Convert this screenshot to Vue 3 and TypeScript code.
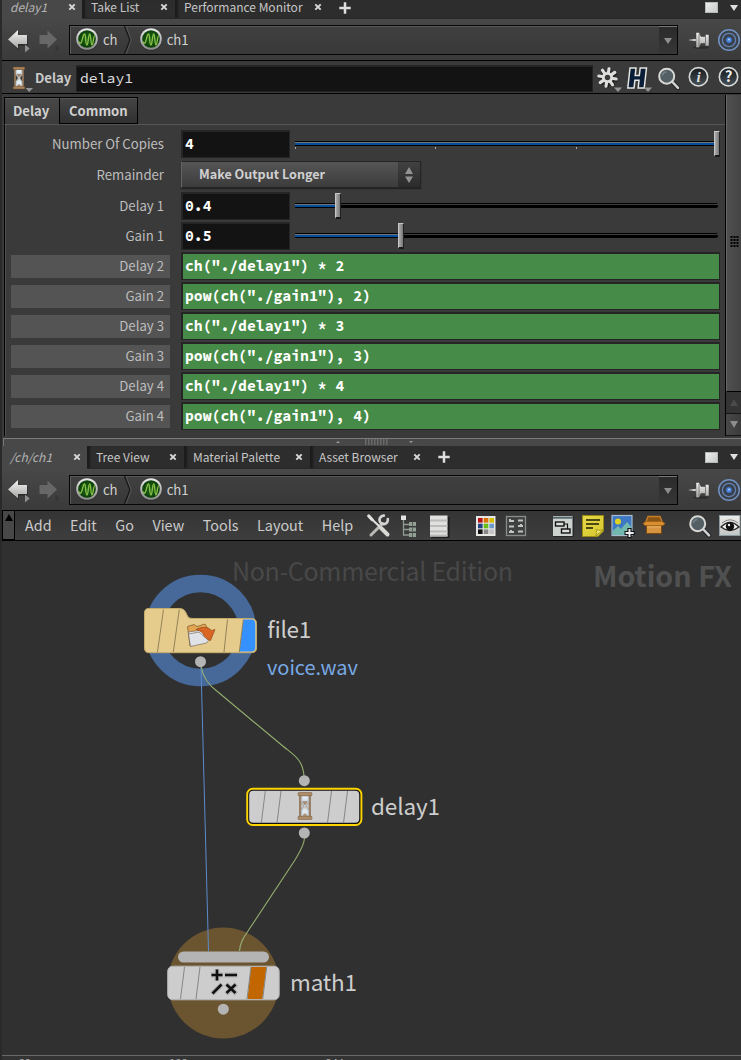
<script setup lang="ts">
interface Tab { label: string; width: number; active?: boolean }
interface Pane { id: string; tabs: Tab[] }
interface Param {
  label: string
  kind: 'slider' | 'menu' | 'expr'
  value: string
  pos?: number
  ticks?: boolean
}

const panes: Pane[] = [
  {
    id: 'params',
    tabs: [
      { label: 'delay1', width: 80, active: true },
      { label: 'Take List', width: 93 },
      { label: 'Performance Monitor', width: 154 },
    ],
  },
  {
    id: 'network',
    tabs: [
      { label: '/ch/ch1', width: 85, active: true },
      { label: 'Tree View', width: 97 },
      { label: 'Material Palette', width: 126 },
      { label: 'Asset Browser', width: 118 },
    ],
  },
]

const params: Param[] = [
  { label: 'Number Of Copies', kind: 'slider', value: '4', pos: 419, ticks: true },
  { label: 'Remainder', kind: 'menu', value: 'Make Output Longer' },
  { label: 'Delay 1', kind: 'slider', value: '0.4', pos: 40 },
  { label: 'Gain 1', kind: 'slider', value: '0.5', pos: 103 },
  { label: 'Delay 2', kind: 'expr', value: 'ch("./delay1") * 2' },
  { label: 'Gain 2', kind: 'expr', value: 'pow(ch("./gain1"), 2)' },
  { label: 'Delay 3', kind: 'expr', value: 'ch("./delay1") * 3' },
  { label: 'Gain 3', kind: 'expr', value: 'pow(ch("./gain1"), 3)' },
  { label: 'Delay 4', kind: 'expr', value: 'ch("./delay1") * 4' },
  { label: 'Gain 4', kind: 'expr', value: 'pow(ch("./gain1"), 4)' },
]

const menus = ['Add', 'Edit', 'Go', 'View', 'Tools', 'Layout', 'Help']
const toolGroups = [['tools', 'tree', 'list'], ['palette', 'grid'], ['netbox', 'note', 'image', 'box'], ['search', 'eye']]
</script>

<template>
  <div class="app">
    <svg class="defs" aria-hidden="true">
      <defs>
        <linearGradient id="silver" x1="0" y1="0" x2="0" y2="1"><stop offset="0" stop-color="#f4f4f2" /><stop offset="1" stop-color="#a4a4a2" /></linearGradient>
        <linearGradient id="ring" x1="0" y1="0" x2="0" y2="1"><stop offset="0" stop-color="#ededed" /><stop offset="1" stop-color="#8a8a8a" /></linearGradient>
        <radialGradient id="green"><stop offset="0" stop-color="#1c6a14" /><stop offset="1" stop-color="#0c3f0a" /></radialGradient>
        <linearGradient id="noteFill" x1="0" y1="0" x2="1" y2="1"><stop offset="0" stop-color="#e6da48" /><stop offset="1" stop-color="#d6c62e" /></linearGradient>
        <linearGradient id="badge" x1="0" y1="0" x2="0" y2="1"><stop offset="0" stop-color="#161a1d" /><stop offset="1" stop-color="#465157" /></linearGradient>
        <linearGradient id="eyeFill" x1="0" y1="0" x2="0" y2="1"><stop offset="0" stop-color="#ececea" /><stop offset="1" stop-color="#c4c6c2" /></linearGradient>
      </defs>
      <symbol id="i-wave" viewBox="0 0 24 24">
        <circle cx="12" cy="12.6" r="11" fill="#2a2a2a" />
        <circle cx="12" cy="12" r="10.8" fill="url(#ring)" />
        <circle cx="12" cy="12" r="8.8" fill="url(#green)" />
        <path d="M3.8 14.500C5 17 6 17 7 13.500S8.600 6.500 9.700 7s.8 11 2.200 11S13.400 7 14.700 7s1 11 2.300 11 1.200-9 2.800-9.500" fill="none" stroke="#8fc24c" stroke-width="1.300" />
      </symbol>
      <symbol id="i-pin" viewBox="0 0 24 20">
        <ellipse cx="14" cy="17.500" rx="8" ry="1.300" fill="#2c2c2c" />
        <path d="M1 10 9 8.800V11.200Z" fill="#d8d8d8" />
        <path d="M9 2.500h3l2 4h4.500V4.500h3.500v11.500h-3.500v-2.500h-4.500l-2 4H9Z" fill="url(#silver)" stroke="#3b3b3b" stroke-width=".5" />
        <path d="M12 4v12M18.500 5v10.500" stroke="#7b7b7b" stroke-width="1" />
      </symbol>
      <symbol id="i-target" viewBox="0 0 24 24">
        <circle cx="12" cy="12" r="10.300" fill="#3c4149" stroke="#7191c2" stroke-width="1.500" />
        <circle cx="12" cy="12" r="6.600" fill="#3a3f47" stroke="#6283b4" stroke-width="1.300" />
        <circle cx="12" cy="12" r="3.800" fill="#33486a" />
        <circle cx="12" cy="12" r="2.700" fill="#4d86da" />
        <circle cx="12" cy="11.500" r="1" fill="#a4c9ff" />
      </symbol>
      <symbol id="i-hourglass" viewBox="0 0 14 26">
        <path d="M2.500 2V24M11.500 2V24" stroke="#8f7152" stroke-width="2.200" />
        <path d="M3.300 3h7.400v6L8 13l2.700 4v6H3.300v-6L6 13 3.300 9Z" fill="#cbdbe6" stroke="#94877a" stroke-width=".7" />
        <path d="M4 8.500h6L7 12.500Z" fill="#9c8268" />
        <path d="M7 13v6" stroke="#c4b49f" stroke-width=".9" />
        <path d="M4.500 22.500 7 19l2.500 3.500Z" fill="#aa8b6c" />
        <path d="M4.800 4h4.400v3H4.800ZM4.700 18 7 15l2.300 3v2H4.700Z" fill="#edf4fa" opacity=".8" />
        <rect x=".3" y=".5" width="13.400" height="2.900" rx="1" fill="#ad8257" stroke="#6f5032" stroke-width=".6" />
        <rect x=".3" y="22.600" width="13.400" height="2.900" rx="1" fill="#ad8257" stroke="#6f5032" stroke-width=".6" />
      </symbol>
      <symbol id="i-search" viewBox="0 0 24 24">
        <path d="M15 15 21 21.500" stroke="#20242a" stroke-width="4.200" stroke-linecap="round" />
        <path d="M14.500 14.500 21 21.300" stroke="#d2d2d0" stroke-width="2.500" stroke-linecap="round" />
        <circle cx="9.700" cy="9.700" r="7.500" fill="#535f65" stroke="#d8d8d5" stroke-width="2" />
        <path d="M5.500 9a4 4 0 0 1 4-3.600" fill="none" stroke="#758289" stroke-width="1.500" />
      </symbol>
    </svg>

    <section v-for="pane in panes" :key="pane.id" class="pane" :class="pane.id">
      <header class="tabs">
        <div v-for="t in pane.tabs" :key="t.label" class="tab" :class="{ active: t.active }" :style="{ width: t.width + 'px' }">
          <span class="tab-name">{{ t.label }}</span>
          <svg class="close" viewBox="0 0 8 8"><path d="M1.300 1.300 6.700 6.700M6.700 1.300 1.300 6.700" /></svg>
        </div>
        <svg class="plus" viewBox="0 0 12 12"><path d="M6 .3V11.700M.3 6H11.700" /></svg>
        <span class="square"></span>
        <svg class="drop" viewBox="0 0 8 6"><path d="M0 0H8L4 6Z" /></svg>
      </header>

      <div class="pathbar">
        <svg class="nav" viewBox="0 0 60 40">
          <path d="M8 19.500 18 10.500V15H27V24.500H18V29.500Z" fill="#202020" opacity=".6" transform="translate(.8 1.200)" />
          <path d="M8 19.500 18 10V15H27V24H18V28.500Z" fill="url(#silver)" />
          <path d="M25 24.500V32.500L29.700 28.500Z" fill="#8e8e8e" />
          <path d="M57 19.500 47.500 10.500V15H39.500V24H47.500V28.500Z" fill="#676767" />
          <path d="M55.500 24.500V32.500L59.500 28.500Z" fill="#363636" />
        </svg>
        <div class="pathbox">
          <svg class="wave"><use href="#i-wave" /></svg><span class="crumb">ch</span>
          <svg class="chev" viewBox="0 0 8 28"><path d="M.5 0 6 14 .5 28" fill="none" stroke="#1b1b1b" stroke-width="1.500" /><path d="M2 0 7.300 14 2 28" fill="none" stroke="#595959" /></svg>
          <svg class="wave second"><use href="#i-wave" /></svg><span class="crumb">ch1</span>
          <span class="pathdrop"><svg viewBox="0 0 8 6"><path d="M0 0H8L4 6Z" /></svg></span>
        </div>
        <svg class="pin"><use href="#i-pin" /></svg>
        <svg class="target"><use href="#i-target" /></svg>
      </div>

      <template v-if="pane.id === 'params'">
        <div class="ophead">
          <svg class="opicon" viewBox="0 0 24 30"><use href="#i-hourglass" x="2.500" y="3.500" width="13" height="23" /><path d="M15.500 25H23L19.200 29Z" fill="#969696" /></svg>
          <span class="optype">Delay</span>
          <div class="opname">delay1</div>
          <div class="opbtns">
            <svg viewBox="0 0 30 30">
              <g transform="translate(13.500 14.500)"><g stroke="#1f1f1f" stroke-width="4.500" transform="translate(.6 .8) rotate(10)"><path d="M0-9.500V9.500M-9.500 0H9.500M-6.700-6.700 6.700 6.700M6.700-6.700-6.700 6.700" /></g>
                <g stroke="#dededc" stroke-width="3.100" transform="rotate(10)" stroke-linecap="round"><path d="M0-8.800V8.800M-8.800 0H8.800M-6.300-6.300 6.300 6.300M6.300-6.300-6.300 6.300" /></g>
                <circle r="5.600" fill="#dededc" /><circle r="2.700" fill="#3a3a3a" /></g>
              <path d="M20 24.500H28L24 29Z" fill="#969696" />
            </svg>
            <svg viewBox="0 0 30 30">
              <path d="M6 5H12L11.200 12.500H15.300L16.200 5H22.500L20.200 25H14.200L15 17.200H10.900L10 25H3.800Z" fill="#0a1d36" stroke="#e4e4e2" stroke-width="1.500" />
              <path d="M20 24.500H28L24 29Z" fill="#969696" />
            </svg>
            <svg viewBox="0 0 30 30"><use href="#i-search" x="3" y="3.500" width="24" height="24" /></svg>
            <svg viewBox="0 0 30 30"><circle cx="14.500" cy="13.800" r="9.200" fill="url(#badge)" stroke="#d6d8d6" stroke-width="1.600" /><text x="14.700" y="19.300" class="b-i">i</text></svg>
            <svg viewBox="0 0 30 30"><circle cx="14.500" cy="13.800" r="9.200" fill="url(#badge)" stroke="#d6d8d6" stroke-width="1.600" /><text x="14.500" y="19" class="b-q">?</text></svg>
          </div>
        </div>

        <div class="body">
          <div class="folder">
            <div class="ftabs"><span class="ftab on">Delay</span><span class="ftab">Common</span></div>
            <div class="plist">
              <div v-for="p in params" :key="p.label" class="row" :class="p.kind">
                <span class="plabel">{{ p.label }}</span>
                <template v-if="p.kind === 'slider'">
                  <span class="field">{{ p.value }}</span>
                  <span class="slider">
                    <span class="track"><span class="fill" :style="{ width: p.pos + 'px' }"></span></span>
                    <span v-if="p.ticks" class="ticks"><i></i><i></i><i></i></span>
                    <span class="handle" :style="{ left: p.pos + 'px' }"></span>
                  </span>
                </template>
                <span v-else-if="p.kind === 'menu'" class="combo">
                  <span class="combo-text">{{ p.value }}</span>
                  <span class="combo-arrows"><svg viewBox="0 0 8 18"><path d="M0 8H8L4 1ZM0 10.500H8L4 17Z" /></svg></span>
                </span>
                <span v-else class="expression">{{ p.value }}</span>
              </div>
            </div>
          </div>
          <div class="scroll">
            <div class="thumb"><svg viewBox="0 0 9 12"><path d="M.5 1H9M.5 4H9M.5 7H9M.5 10H9" /></svg></div>
            <div class="sbtn dim"><svg viewBox="0 0 8 7"><path d="M0 7H8L4 0Z" /></svg></div>
            <div class="sbtn"><svg viewBox="0 0 8 7"><path d="M0 0H8L4 7Z" /></svg></div>
          </div>
        </div>
        <div class="splitter">
          <svg viewBox="0 0 80 6"><path d="M0 4H4L2 2ZM73 2H77L75 4Z" fill="#999" /><path d="M29 1H53M29 3H53M29 5H53" stroke="#8a8a8a" stroke-width="1" stroke-dasharray="1.500 1.500" /></svg>
        </div>
      </template>

      <template v-else>
        <nav class="menubar">
          <span class="collapse"><svg viewBox="0 0 8 7"><path d="M0 7H8L4 0Z" /></svg></span>
          <div class="menus"><span v-for="m in menus" :key="m">{{ m }}</span></div>
          <div class="tools">
            <div v-for="(g, gi) in toolGroups" :key="gi" class="tgroup">
              <svg v-for="n in g" :key="n" viewBox="0 0 24 24">
                <g v-if="n === 'tools'" fill="none" stroke-linecap="round">
                  <path d="M4 21 15.500 9.500" stroke="#b9bab7" stroke-width="3" /><path d="M20.800 5.200a4.200 4.200 0 1 1-4-3.500" stroke="#d4d5d2" stroke-width="2.700" />
                  <path d="M3 3.500 12 12" stroke="#e2e2df" stroke-width="2" /><path d="M1.800 2 5 5.500" stroke="#e2e2df" stroke-width="3.200" /><path d="M14 14 20.500 20.500" stroke="#d8d9d5" stroke-width="4" />
                </g>
                <g v-else-if="n === 'tree'">
                  <path d="M6.500 5V21H13M6.500 10.500H13M6.500 15.500H13" fill="none" stroke="#8f9b90" stroke-width="1.300" />
                  <rect x="4" y="1.500" width="5" height="4.500" fill="#e3e3e1" /><g fill="#92a094"><rect x="12" y="8" width="7" height="4" /><rect x="12" y="13.500" width="7" height="4" /><rect x="12" y="19" width="7" height="4" /></g><path d="M15.500 8V12M15.500 13.500V17.500M15.500 19V23" stroke="#59645b" />
                </g>
                <g v-else-if="n === 'list'"><rect x="3.500" y="3" width="18" height="21" fill="#1d1d1d" /><rect x="2" y="1.500" width="17.500" height="21" fill="#e1e1df" /><path d="M2 6.500H19.500M2 12H19.500M2 17.500H19.500M2 21.500H19.500" stroke="#b9bcb8" stroke-width="2.200" /></g>
                <g v-else-if="n === 'palette'">
                  <rect x="2" y="2" width="19.500" height="20" fill="#e7e7e5" />
                  <path d="M4 4h4.600v4.600H4Z" fill="#bb1010" /><path d="M9.700 4h4.600v4.600H9.700Z" fill="#dd7000" /><path d="M15.400 4H20v4.600h-4.600Z" fill="#d4be00" />
                  <path d="M4 9.700h4.600v4.600H4Z" fill="#204080" /><path d="M9.700 9.700h4.600v4.600H9.700Z" fill="#68bd13" /><path d="M15.400 9.700H20v4.600h-4.600Z" fill="#6b98cd" />
                  <path d="M4 15.400h4.600V20H4Z" fill="#111" /><path d="M9.700 15.400h4.600V20H9.700Z" fill="#888" /><path d="M15.400 15.400H20V20h-4.600Z" fill="#c4c4c4" />
                </g>
                <g v-else-if="n === 'grid'"><rect x="2.500" y="2.500" width="19" height="19" fill="#3f4040" stroke="#8b8d8d" stroke-width="1.300" /><path d="M5 7h5M14 6.500h5M5 12.500h5M14 12h5M5 18h5M14 17.500h5" stroke="#c2c3c1" stroke-width="2.200" /><path d="M5 5.500h2M16 10.500h2M6 16.500h2" stroke="#c2c3c1" /></g>
                <g v-else-if="n === 'netbox'"><rect x="2" y="2" width="21" height="21" fill="#242828" /><rect x="2" y="2" width="19.500" height="20" fill="#cfd3cf" /><path d="M2 3.700H21.500" stroke="#53666c" stroke-width="2" /><rect x="4.500" y="8" width="8.500" height="4" fill="#ddd" stroke="#111" stroke-width="1.400" /><rect x="10.500" y="15" width="8.500" height="4" fill="#ddd" stroke="#111" stroke-width="1.400" /><path d="M13 10h3.500v5" fill="none" stroke="#111" stroke-width="1.200" /></g>
                <g v-else-if="n === 'note'"><path d="M1.500 1.500H22.500V17L17 22.500H1.500Z" fill="url(#noteFill)" stroke="#9a8b13" /><path d="M22.300 15.500 14.500 22.300Q17 18 15 15.500Q19 17.500 22.300 15.500Z" fill="#f0e87a" stroke="#9a8b13" stroke-width=".8" /><path d="M5 6H19M5 10H18M5 14H12" stroke="#1c1b08" stroke-width="1.500" /></g>
                <g v-else-if="n === 'image'"><rect x="1" y="1.500" width="20" height="20" fill="#3e78c4" stroke="#a9bccf" stroke-width="1.200" /><circle cx="7" cy="7.500" r="3" fill="#e0d320" /><path d="M1.600 20.900V17L7 12l3 3 6-7 4.400 5v7.900Z" fill="#72b8ac" /><path d="M18.500 14V24M13.500 19H23.700" stroke="#111" stroke-width="4.200" /><path d="M18.500 15V23M14.500 19H22.700" stroke="#eee" stroke-width="1.900" /></g>
                <g v-else-if="n === 'box'"><path d="M4.500 9.500H19.500V19.500H4.500Z" fill="#d79441" stroke="#7b480d" /><path d="M6 2.500H18L20.500 8.500H3.500Z" fill="#8a5415" stroke="#c57f27" stroke-width="1.300" /><path d="M4 7.500 1 9.500 3 11.500H21L23 9.500 20 7.500Z" fill="#d88e31" stroke="#9e5f14" stroke-width=".8" /><path d="M5 13H19" stroke="#e7ad65" /></g>
                <use v-else-if="n === 'search'" href="#i-search" x="0" y="0" width="24" height="24" />
                <g v-else><rect x="1.500" y="1.500" width="20.500" height="20" fill="url(#eyeFill)" stroke="#8c9b9f" /><path d="M3 13Q12 4 21 13Q12 20 3 13Z" fill="#f3f3f2" stroke="#252525" stroke-width="1.300" /><circle cx="12" cy="12.500" r="4.200" fill="#111" /><circle cx="11" cy="11" r="1.200" fill="#eee" /><path d="M4 9Q12 2.500 20 9" fill="none" stroke="#888" /></g>
              </svg>
            </div>
          </div>
        </nav>

        <svg class="canvas" viewBox="0 541 741 514">
          <text x="232" y="581" class="wm" textLength="281">Non-Commercial Edition</text>
          <text x="593" y="586.500" class="ctx" textLength="139" lengthAdjust="spacingAndGlyphs">Motion FX</text>

          <circle cx="200.500" cy="630.500" r="47" fill="none" stroke="#46699a" stroke-width="17.500" />
          <circle cx="223.300" cy="983" r="55.500" fill="#6b5531" />

          <path d="M201 667 208.500 951" fill="none" stroke="#5c8bcb" />
          <path d="M201 666C203 680 211 687 218 692L284 747C294 755 303 760 304 776" fill="none" stroke="#94ae70" stroke-width="1.100" />
          <path d="M304.500 838C304 846 299 853 295 860L248 931C243 938 240 943 239.500 951" fill="none" stroke="#94ae70" stroke-width="1.100" />

          <path d="M148.500 608.500H180Q184 608.500 185.500 612L187.500 616Q188.500 618.500 192 618.500H251.500Q256.500 618.500 256.500 623.500V648Q256.500 652.700 251.500 652.700H149Q144.500 652.700 144.500 648V613Q144.500 608.500 148.500 608.500Z" fill="#e5cb8c" stroke="#c5ab6a" />
          <path d="M243.500 619.500H251.500Q255.300 619.500 255.300 624V647.500Q255.300 651.500 251.500 651.500H239.500Z" fill="#3591ff" />
          <path d="M163.500 609.500 157.500 652M179.300 609.500 173.300 652M227.500 619.500 224 652M243.300 619.500 239.300 652" stroke="#8a7a52" stroke-width=".9" />
          <g stroke-width=".7">
            <path d="M187.500 626.500 194 624.500 197 626.500 205 624 208 629 190 646Z" fill="#e2a552" stroke="#7d5731" />
            <path d="M188.500 632 206 629.500 209 637 190.500 646.500Z" fill="#e9edf1" stroke="#7a6a58" />
            <path d="M196 629.500C202 626.500 208 626.500 211.500 630.500L215 629.500 210.500 640.500 201.500 637.500 204 635.500C203 632.500 200 630.500 196 629.500Z" fill="#d96622" stroke="#914b1f" />
            <path d="M190.500 646.500 188.500 634 199 632 208.500 640.500 206.500 643Z" fill="#dfe3e8" stroke="#7a6a58" />
          </g>
          <circle cx="200.500" cy="661.700" r="5.500" fill="#b4b4b4" />
          <text x="267" y="637.500" class="nm" textLength="44">file1</text>
          <text x="267" y="675" class="sub" textLength="91">voice.wav</text>

          <circle cx="304.300" cy="780.700" r="5.500" fill="#b4b4b4" />
          <circle cx="304.300" cy="833" r="5.500" fill="#b4b4b4" />
          <rect x="247.200" y="788.800" width="114.200" height="36.200" rx="5.500" fill="#111" stroke="#ffd500" stroke-width="1.900" />
          <rect x="249.200" y="790.800" width="110" height="32" rx="4" fill="#cdcdcd" />
          <path d="M265.300 791 261.300 823M281 791 277 823M331.500 791 327.500 823M347.500 791 343.500 823" stroke="#868686" />
          <use href="#i-hourglass" x="297.500" y="792" width="15" height="28" opacity=".85" />
          <text x="371" y="815" class="nm" textLength="69">delay1</text>

          <rect x="178" y="951.500" width="91" height="11" rx="5.500" fill="#b4b4b4" />
          <rect x="167.700" y="966.200" width="111.500" height="33.600" rx="5" fill="#cdcdcd" stroke="#b5b5b5" />
          <path d="M251 967H266.500L262.300 999H247.500Z" fill="#c26600" />
          <path d="M184.500 967 180.500 999M200 967 196 999M251 967 247 999M266.700 967 262.700 999" stroke="#868686" />
          <g stroke="#999" stroke-width="4.800" opacity=".5"><path d="M217 969V981M211 975H223M224.500 975H237.500M212 994 222 984M226 984 236.500 994M226 994 236.500 984" /></g>
          <g stroke="#111" stroke-width="2.600"><path d="M217 969.500V980.500M211.500 975H222.500M225 975H237M212.500 993.500 221.500 984.500M226.500 984.500 235.500 993M226.500 993 235.500 984.500" /></g>
          <circle cx="223.300" cy="1009.200" r="5.500" fill="#b4b4b4" />
          <text x="290" y="991" class="nm" textLength="67">math1</text>
        </svg>
        <div class="timeline"><span>22</span><span>188</span><span>344</span></div>
      </template>
    </section>
  </div>
</template>

<style>
html, body { background: #2f2f2f; overflow: hidden; }
</style>

<style scoped>
* { box-sizing: border-box; }
.app { width: 741px; height: 1060px; overflow: hidden; background: #3a3a3a; color: #cbcbcb; font-family: "Noto Sans CJK SC", "Noto Sans", sans-serif; font-size: 13px; border-left: 2px solid #2a2a2a; white-space: nowrap; }
.defs { position: absolute; width: 0; height: 0; }
svg { display: block; flex: none; }
.pane { display: flex; flex-direction: column; }
.params { height: 446px; }
.tabs { height: 23px; display: flex; align-items: center; background: #2d2d2d; border-bottom: 1px solid #292929; flex: none; }
.tab { height: 22px; display: flex; align-items: center; justify-content: space-between; padding: 0 7px 0 9px; box-shadow: inset 4px 0 2px -1px #1c1c1c; flex: none; color: #c6c6c6; font-size: 12px; line-height: 20px; }
.tab.active { background: #484848; box-shadow: none; font-style: italic; padding: 0 6px 0 8px; color: #b4b4b4; height: 23px; }
.params .tabs { height: 19px; padding-bottom: 3px; }
.params .tab { height: 18px; margin-bottom: -3px; padding-bottom: 4px; line-height: 14px; }
.params .tab.active { height: 19px; margin-bottom: -4px; padding-bottom: 5px; }
.close { width: 8px; height: 8px; stroke: #d9d9d9; stroke-width: 1.900; }
.plus { width: 12px; height: 12px; margin-left: 10px; stroke: #dedede; stroke-width: 2.500; }
.square { width: 13px; height: 11px; margin-left: auto; background: linear-gradient(135deg, #eee, #c9cac6); border: 1px solid #b4b9ba; }
.drop { width: 8px; height: 6px; margin: 0 3px 0 12px; fill: #dedede; }
.pathbar { height: 42px; display: flex; background: linear-gradient(#484848, #3a3a3a); border-bottom: 1px solid #000; flex: none; padding-top: 1px; }
.nav { width: 60px; height: 40px; margin-left: -2px; margin-right: 9px; }
.pathbox { width: 609px; height: 30px; margin-top: 5px; border: 1px solid #050505; box-shadow: inset 1px 1px #585858; background: linear-gradient(#404040, #383838); display: flex; align-items: center; padding-left: 5px; color: #d0d0d0; font-size: 13.200px; }
.wave { width: 24px; height: 24px; margin-top: -2px; }
.crumb { margin-left: 4px; line-height: 26px; letter-spacing: -.2px; margin-top: -1px; }
.chev { width: 8px; height: 28px; margin-left: 7px; }
.wave.second { margin-left: 6.500px; }
.pathdrop { width: 18px; height: 28px; margin-left: auto; background: linear-gradient(#2b2b2b, #363636); display: flex; align-items: center; justify-content: center; border-top: 1px solid #777; }
.pathdrop svg { width: 8px; height: 6px; fill: #8e8e8e; }
.pin { width: 24px; height: 20px; margin: 10px 0 0 9px; }
.target { width: 24px; height: 24px; margin: 8px 0 0 6px; }

.ophead { height: 33px; display: flex; border-bottom: 1px solid #000; flex: none; padding-left: 8px; }
.opicon { width: 24px; height: 30px; margin-top: 2px; }
.optype { font-weight: 700; font-size: 13.100px; line-height: 33px; width: 41px; margin-left: 1px; flex: none; }
.opname { width: 517px; height: 27px; flex: none; margin-top: 4px; background: #131313; border: 1px solid #222; border-top: 2px solid #252525; padding-left: 3px; font: 14.750px/21px "Source Code Pro", "Noto Sans Mono CJK SC", "DejaVu Sans Mono", monospace; color: #e0e0e0; }
.opbtns { display: flex; margin-left: .5px; }
.opbtns svg { width: 30px; height: 30px; margin-top: 2px; }
.b-i { font: italic 700 15px "Liberation Serif", serif; fill: #dedede; text-anchor: middle; }
.b-q { font: 700 15px "Noto Sans CJK SC", sans-serif; fill: #eee; text-anchor: middle; }
.body { display: flex; height: 344px; flex: none; }
.folder { width: 723px; padding: 3px 0 0 2px; }
.ftabs { display: flex; height: 27px; }
.ftab { border: 1px solid #000; border-left: 0; width: 78px; height: 27px; padding-left: 9px; line-height: 25px; font-weight: 700; font-size: 13.100px; background: linear-gradient(#454545, #303030); box-shadow: inset 0 1px #555; color: #d0d0d0; }
.ftab.on { width: 56px; border-left: 1px solid #000; background: linear-gradient(#474747, #3b3b3b); padding-left: 8px; border-bottom: 0; }
.plist { border-top: 1px solid #555; border-left: 1px solid #000; box-shadow: inset 1px 0 #515151; padding: 5px 0 0 6px; height: 312px; }
.row { display: flex; height: 30px; align-items: flex-start; }
.row.menu { height: 32px; padding-top: 1px; }
.plabel { width: 159px; height: 24px; line-height: 22px; margin: 3px 11px 0 0; text-align: right; padding-right: 6px; font-size: 13.200px; color: #bdbdbd; }
.row.expr .plabel { background: #545454; height: 23px; line-height: 21px; }
.field, .expression { width: 109px; height: 28px; background: #131313; border: 1px solid #252525; border-width: 2px 1px 1px 2px; font: 700 14.750px/23px "Source Code Pro", "Noto Sans Mono CJK SC", "DejaVu Sans Mono", monospace; color: #fff; padding-left: 2px; }
.expression { width: 539px; background: #468b47; }
.row.slider > .slider { position: relative; width: 426px; height: 28px; margin-left: 5px; }
.track { display: block; width: 423px; height: 5px; margin-top: 11px; background: linear-gradient(#000 1px, #3e3e3e 1px 2px, #000 2px); border-radius: 2px; }
.fill { display: block; height: 5px; background: linear-gradient(#000 1px, #70757b 1px 2px, #044c9c 2px 4px, #000 4px); }
.ticks { display: flex; justify-content: flex-start; gap: 139.400px; padding-top: 1px; }
.ticks i { width: 1px; height: 2px; background: #aaa; }
.handle { position: absolute; top: 1px; width: 6px; height: 26px; background: linear-gradient(90deg, #aaa, #777); border: 1px solid #c6c6c6; border-right-color: #222; border-bottom: 2px solid #191919; }
.combo { width: 240px; height: 27px; display: flex; background: linear-gradient(#555, #3c3c3c); border: 1px solid #252525; border-left-color: #666; box-shadow: 0 1px 1px #222; }
.combo-text { flex: 1; padding-left: 17px; font-size: 12.600px; font-weight: 700; line-height: 24px; color: #d0d0d0; }
.combo-arrows { width: 22px; background: linear-gradient(#414141, #2b2b2b); display: flex; align-items: center; justify-content: center; }
.combo-arrows svg { width: 8px; height: 18px; fill: #939393; }
.scroll { width: 16px; margin-top: 1px; height: 341px; border-left: 1px solid #000; border-bottom: 1px solid #000; }
.thumb { height: 297px; background: linear-gradient(90deg, #505050, #444); border-bottom: 1px solid #000; border-left: 1px solid #666; display: flex; align-items: center; padding-left: 3px; }
.thumb svg { width: 9px; height: 12px; margin-top: -3px; stroke: #000; stroke-width: 2; stroke-dasharray: 2 1; }
.sbtn { height: 22px; display: flex; align-items: center; justify-content: center; background: linear-gradient(90deg, #494949, #3b3b3b); border-bottom: 1px solid #151515; }
.sbtn svg { width: 8px; height: 7px; fill: #8d8d8d; }
.sbtn.dim { background: #343434; }
.sbtn.dim svg { fill: #4b4b4b; }
.splitter { height: 8px; margin: 0 0 1px 1px; border-top: 1px solid #7c7c7c; border-left: 1px solid #777; background: #484848; flex: none; }
.splitter svg { width: 80px; height: 6px; margin-left: 332px; }

.menubar { height: 30px; display: flex; background: linear-gradient(#343434, #3e3e3e); border-bottom: 1px solid #000; flex: none; overflow: hidden; }
.collapse { width: 13px; height: 29px; border: 1px solid #000; border-top: 0; background: #484848; padding: 3px 0 0 2px; flex: none; }
.collapse svg { width: 8px; height: 7px; fill: #000; }
.menus { display: flex; gap: 18.500px; width: 352px; padding-left: 10px; font-size: 14.400px; line-height: 27px; color: #cbcbcb; flex: none; }
.tools { display: flex; gap: 22.400px; align-items: center; }
.tgroup { display: flex; gap: 6.300px; }
.tgroup svg { width: 24px; height: 24px; }
.canvas { width: 741px; height: 514px; margin-left: -2px; background: #303030; }
.wm { font-size: 25px; fill: #484848; }
.ctx { font-size: 28px; font-weight: 700; fill: #505050; }
.nm { font-size: 22.500px; fill: #cdcdcd; }
.sub { font-size: 20px; fill: #78a8e4; }
.timeline { height: 5px; flex: none; border-top: 1px solid #686868; background: #333; overflow: hidden; display: flex; gap: 138px; padding-left: 17px; font-size: 11px; line-height: 12px; color: #a7a7a7; }
</style>
